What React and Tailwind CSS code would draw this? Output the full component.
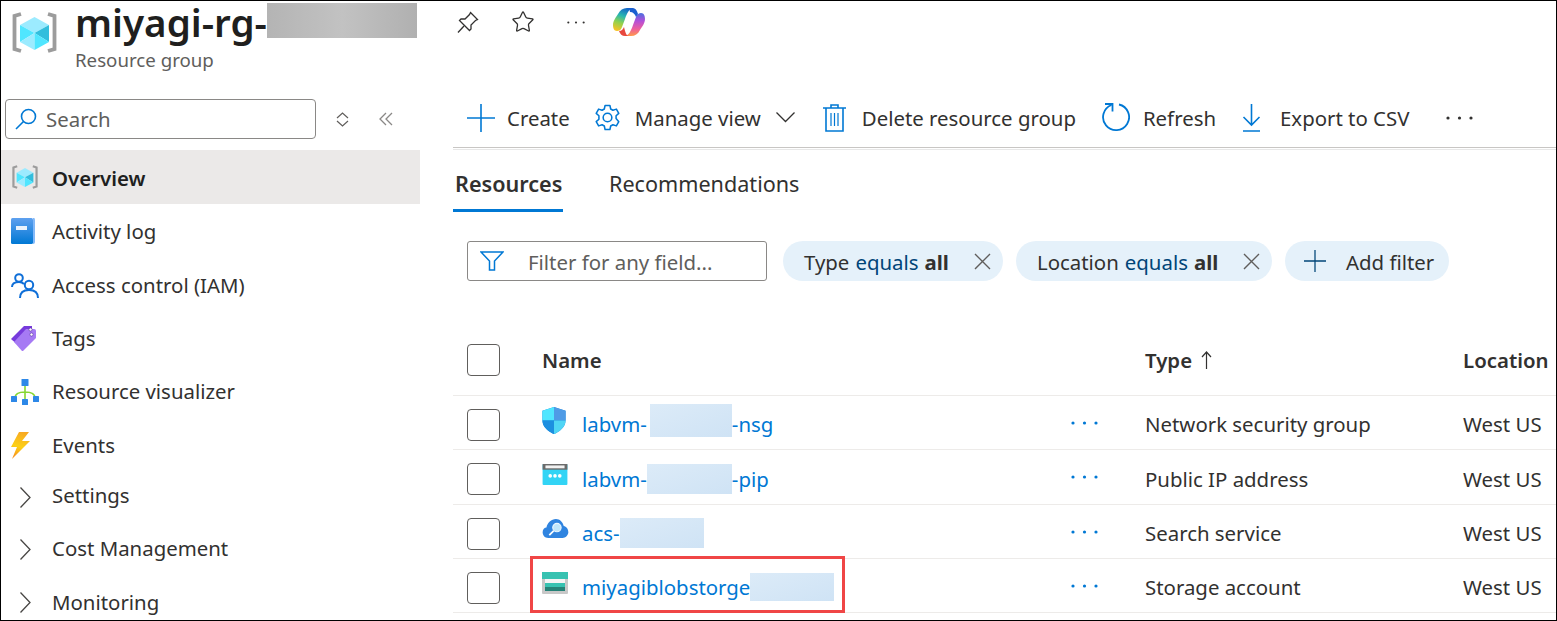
import { Star } from 'lucide-react'

function ResourceGroupIcon({ className }) {
    return (
        <svg className={className} viewBox="0 0 45 41" fill="none">
            <path d="M9 2 L2.5 4 V37 L9 39" stroke="#9c9c9c" strokeWidth="3.8" />
            <path d="M36 2 L42.5 4 V37 L36 39" stroke="#9c9c9c" strokeWidth="3.8" />
            <path d="M22.5 5 L37 13 L22.5 21 L8 13Z" fill="#9cebff" />
            <path d="M8 13 L22.5 21 L8 30Z" fill="#50e6ff" />
            <path d="M8 30 L22.5 21 V38Z" fill="#9cebff" />
            <path d="M37 13 L22.5 21 L37 30Z" fill="#32bedd" />
            <path d="M37 30 L22.5 21 V38Z" fill="#50e6ff" />
        </svg>
    )
}

function CopilotIcon() {
    return (
        <svg className="w-[32px] h-[30px]" viewBox="0 0 32 30">
            <defs>
                <linearGradient id="cl" x1="0.6" y1="0" x2="0.3" y2="1">
                    <stop offset="0" stopColor="#1466c8" />
                    <stop offset="0.35" stopColor="#27b7b0" />
                    <stop offset="0.65" stopColor="#8fd14f" />
                    <stop offset="1" stopColor="#f7c325" />
                </linearGradient>
                <linearGradient id="cr" x1="0.5" y1="0" x2="0.5" y2="1">
                    <stop offset="0" stopColor="#4a6fe0" />
                    <stop offset="0.35" stopColor="#b44fd8" />
                    <stop offset="0.7" stopColor="#ee5f9c" />
                    <stop offset="1" stopColor="#ff9a4a" />
                </linearGradient>
            </defs>
            <path d="M14 1 H20 C16 2 14 6 12 12 L9 20 C8 23 6 24 4 24 C1 24 0 21 0 18 C0 14 3 10 5 7 C7 3 10 1 14 1Z" fill="url(#cl)" />
            <path d="M18 29 H12 C16 28 18 24 20 18 L23 10 C24 7 26 6 28 6 C31 6 32 9 32 12 C32 16 29 20 27 23 C25 27 22 29 18 29Z" fill="url(#cr)" />
            <path d="M16 1 H20 C22 1 24 3 25 7 L23 10 C22 7 20 5 17 5Z" fill="#1b5fd0" />
            <path d="M6 24 C9 24 10 22 11 20 C12 24 13 29 16 29 H12 C9 29 7 27 6 24Z" fill="#e8483f" />
        </svg>
    )
}

function PinIcon() {
    return (
        <svg className="w-[24px] h-[24px]" viewBox="0 0 24 24" fill="none" stroke="#323130" strokeWidth="1.3">
            <path d="M14.5 2.5 L21.5 9.5 L19.5 10.5 L15 15 L15 19 L13.5 20.5 L3.5 10.5 L5 9 L9 9 L13.5 4.5Z" />
            <path d="M8 16 L2 22.5" />
        </svg>
    )
}

function PlusIcon({ className, stroke }) {
    return (
        <svg className={className} viewBox="0 0 28 28" fill="none" stroke={stroke} strokeWidth="1.6">
            <path d="M14 0 V28 M0 14 H28" />
        </svg>
    )
}

function GearIcon() {
    return (
        <svg className="w-[27px] h-[27px]" viewBox="0 0 28 28" fill="none" stroke="#0078d4" strokeWidth="1.6">
            <path d="M11.5 1.5 H16.5 L17.3 5.2 L19.6 6.5 L23.2 5.3 L25.7 9.7 L22.9 12.2 V15 L25.7 18.3 L23.2 22.7 L19.6 21.5 L17.3 22.8 L16.5 26.5 H11.5 L10.7 22.8 L8.4 21.5 L4.8 22.7 L2.3 18.3 L5.1 15.8 V12.2 L2.3 9.7 L4.8 5.3 L8.4 6.5 L10.7 5.2Z" strokeLinejoin="round" />
            <circle cx="14" cy="14" r="4.5" />
        </svg>
    )
}

function TrashIcon() {
    return (
        <svg className="w-[23px] h-[28px]" viewBox="0 0 23 28" fill="none" stroke="#0078d4" strokeWidth="1.6">
            <path d="M0 4 H23 M8 4 V1 H15 V4 M3 4 V27 H20 V4" />
            <path d="M8 9 V22 M11.5 9 V22 M15 9 V22" strokeWidth="1.2" />
        </svg>
    )
}

function RefreshIcon() {
    return (
        <svg className="w-[28px] h-[29px]" viewBox="0 0 28 29" fill="none" stroke="#0078d4" strokeWidth="1.8">
            <path d="M17 1.5 A13 13 0 1 1 9.5 2" />
            <path d="M3 1 H10.5 V8.5" />
        </svg>
    )
}

function DownloadIcon() {
    return (
        <svg className="w-[21px] h-[28px]" viewBox="0 0 21 28" fill="none" stroke="#0078d4" strokeWidth="1.6">
            <path d="M10.5 0 V21 M2.5 13 L10.5 21 L18.5 13 M2 27 H19" />
        </svg>
    )
}

function DotsIcon({ fill, className }) {
    return (
        <svg className={className} viewBox="0 0 27 4" fill={fill}>
            <circle cx="2" cy="2" r="1.6" />
            <circle cx="13.5" cy="2" r="1.6" />
            <circle cx="25" cy="2" r="1.6" />
        </svg>
    )
}

function CloseIcon() {
    return (
        <svg className="w-[17px] h-[17px]" viewBox="0 0 17 17" fill="none" stroke="#605e5c" strokeWidth="1.4">
            <path d="M1 1 L16 16 M16 1 L1 16" />
        </svg>
    )
}

function SidebarIcon({ name }) {
    if (name === 'overview') return <ResourceGroupIcon className="w-[26px] h-[24px]" />
    if (name === 'activity') {
        return (
            <svg className="w-[24px] h-[26px]" viewBox="0 0 24 26">
                <defs>
                    <linearGradient id="book" x1="0" y1="0" x2="0" y2="1">
                        <stop offset="0" stopColor="#5ea0ef" />
                        <stop offset="1" stopColor="#0078d4" />
                    </linearGradient>
                </defs>
                <rect x="0" y="0" width="22" height="26" rx="1.5" fill="url(#book)" />
                <path d="M22 0 H23 Q24 0 24 2 V24 Q24 26 22 26 V0Z" fill="#83b9f9" />
                <rect x="5" y="8" width="11" height="4" fill="#eaf3fc" />
            </svg>
        )
    }
    if (name === 'access') {
        return (
            <svg className="w-[28px] h-[25px]" viewBox="0 0 28 25" fill="none" stroke="#0f6fd8" strokeWidth="2">
                <circle cx="8" cy="5" r="3.8" />
                <path d="M1 14 C1 10 4 9 8 9 C10 9 12 10 13 11" />
                <circle cx="18" cy="12" r="4.2" />
                <path d="M9 25 C9 19 13 17 18 17 C23 17 27 19 27 25" />
            </svg>
        )
    }
    if (name === 'tags') {
        return (
            <svg className="w-[26px] h-[26px]" viewBox="0 0 26 26">
                <path d="M0 13 L13 0 H21 L21 8 L8 20Z" fill="#773adc" />
                <path d="M3 16 L15 3 H23 Q25 3 25 5 V12 L12 25 H11Z" fill="#a67af4" />
                <circle cx="19.5" cy="3.5" r="1.6" fill="#fff" stroke="#552f99" strokeWidth="0.6" />
                <circle cx="20.5" cy="8.5" r="1.6" fill="#fff" stroke="#552f99" strokeWidth="0.6" />
            </svg>
        )
    }
    if (name === 'visualizer') {
        return (
            <svg className="w-[28px] h-[26px]" viewBox="0 0 28 26">
                <path d="M14 6 V21 M4 19 C4 14 10 13 14 13 C18 13 24 14 24 19" fill="none" stroke="#86d633" strokeWidth="1.6" />
                <rect x="10.5" y="0" width="7" height="7" rx="0.6" fill="#2d88e8" />
                <rect x="0" y="17" width="6" height="6" rx="0.6" fill="#2d88e8" />
                <rect x="22" y="17" width="6" height="6" rx="0.6" fill="#2d88e8" />
                <rect x="11" y="20" width="6" height="6" rx="0.6" fill="#2d88e8" />
            </svg>
        )
    }
    if (name === 'events') {
        return (
            <svg className="w-[20px] h-[27px]" viewBox="0 0 20 27">
                <defs>
                    <linearGradient id="bolt" x1="0.6" y1="0" x2="0.4" y2="1">
                        <stop offset="0" stopColor="#f7a823" />
                        <stop offset="0.55" stopColor="#fcd116" />
                        <stop offset="1" stopColor="#f78d1e" />
                    </linearGradient>
                </defs>
                <path d="M8 0 H18 L11 9 H19 L1 27 L6 15 H0Z" fill="url(#bolt)" />
            </svg>
        )
    }
    return (
        <svg className="w-[11px] h-[21px]" viewBox="0 0 11 21" fill="none" stroke="#484644" strokeWidth="1.3">
            <path d="M0.5 0.5 L10 10.5 L0.5 20.5" />
        </svg>
    )
}

function ResourceIcon({ type }) {
    if (type === 'nsg') {
        return (
            <svg className="w-[24px] h-[27px]" viewBox="0 0 24 28">
                <path d="M12 0 L24 4 V14 C24 21 17 26 12 28 C7 26 0 21 0 14 V4Z" fill="#0f85dc" />
                <path d="M12 0 L0 4 V14 H12Z" fill="#50e6ff" />
                <path d="M12 0 L24 4 V14 H12Z" fill="#4f9be6" />
                <path d="M12 14 V28 C7 26 0 21 0 14Z" fill="#1d8fe0" />
                <path d="M12 14 H24 C24 21 17 26 12 28Z" fill="#50d5f5" />
            </svg>
        )
    }
    if (type === 'pip') {
        return (
            <svg className="w-[26px] h-[21px]" viewBox="0 0 26 22">
                <rect width="26" height="22" rx="1" fill="#32d4f5" />
                <rect width="26" height="6" fill="#6b6b6b" />
                <rect x="3" y="1.5" width="20" height="3" fill="#f2f2f2" />
                <circle cx="8" cy="12.5" r="1.9" fill="#fff" />
                <circle cx="13" cy="12.5" r="1.9" fill="#fff" />
                <circle cx="18" cy="12.5" r="1.9" fill="#fff" />
            </svg>
        )
    }
    if (type === 'search') {
        return (
            <svg className="w-[27px] h-[20px]" viewBox="0 0 27 21">
                <path d="M6 20 C2 20 0 17 0 14 C0 11 2 9 4 9 C5 4 9 0 14 0 C18 0 21 3 22 7 C25 8 27 10 27 14 C27 17 24 20 21 20Z" fill="#2f84e0" />
                <circle cx="15" cy="9" r="4.4" fill="#bfe6fb" stroke="#e8f6ff" strokeWidth="1.2" />
                <path d="M11.5 12.5 L7 17" stroke="#fff" strokeWidth="1.8" />
            </svg>
        )
    }
    return (
        <svg className="w-[26px] h-[22px]" viewBox="0 0 26 22">
            <rect width="26" height="22" rx="1" fill="#c8c8c8" />
            <rect width="26" height="7" fill="#37c2b1" />
            <rect x="3" y="7" width="20" height="4" fill="#f4f4f4" />
            <rect x="3" y="11" width="20" height="4" fill="#37c2b1" />
            <rect x="3" y="15" width="20" height="4" fill="#258277" />
        </svg>
    )
}

function Blur({ className }) {
    return <span className={`block bg-gradient-to-br from-[#dcebf8] to-[#cfe3f5] ${className}`} />
}

const navItems = [
    { label: 'Activity log', icon: 'activity', h: 'h-[54px]', text: '' },
    { label: 'Access control (IAM)', icon: 'access', h: 'h-[54px]', text: '' },
    { label: 'Tags', icon: 'tags', h: 'h-[53px]', text: '' },
    { label: 'Resource visualizer', icon: 'visualizer', h: 'h-[53px]', text: '' },
    { label: 'Events', icon: 'events', h: 'h-[54px]', text: '' },
    { label: 'Settings', icon: 'chevron', h: 'h-[50px]', text: 'pb-[4px]' },
    { label: 'Cost Management', icon: 'chevron', h: 'h-[54px]', text: 'pb-[2px]' },
    { label: 'Monitoring', icon: 'chevron', h: 'h-[52px]', text: '' },
]

const rows = [
    { icon: 'nsg', prefix: 'labvm-', blur: 'ml-[3px] w-[82px] h-[33px] -mt-[7px]', suffix: '-nsg', type: 'Network security group', h: 'h-[54px]' },
    { icon: 'pip', prefix: 'labvm-', blur: 'w-[85px] h-[30px]', suffix: '-pip', type: 'Public IP address', h: 'h-[55px]' },
    { icon: 'search', prefix: 'acs-', blur: 'w-[84px] h-[30px]', suffix: '', type: 'Search service', h: 'h-[54px]' },
    { icon: 'storage', prefix: 'miyagiblobstorge', blur: 'w-[84px] h-[28px]', suffix: '', type: 'Storage account', h: 'h-[54px]' },
]

function Checkbox() {
    return <div className="w-[33px] h-[32px] rounded-[4px] border border-[#605e5c] bg-white" />
}

function FilterPill({ label, width }) {
    return (
        <div className={`flex items-center h-[40px] rounded-full bg-[#e5f1fa] pl-[21px] ${width}`}>
            <span className="pt-[3px]">{label}</span>
            <span className="ml-[6px] pt-[3px] text-[#004578]">equals</span>
            <span className="ml-[6px] pt-[3px] font-bold">all</span>
            <span className="ml-auto mr-[12px]"><CloseIcon /></span>
        </div>
    )
}

export default function App() {
    return (
        <div className="w-[1557px] h-[621px] flex overflow-hidden border border-black bg-white text-[#323130] text-[20.4px] font-['Noto_Sans',sans-serif]">
            {/* left blade menu */}
            <div className="w-[419px] shrink-0">
                <div className="h-[98px] flex overflow-hidden">
                    <div className="pl-[11px] pt-[11px] w-[74px] shrink-0">
                        <ResourceGroupIcon className="w-[45px] h-[41px]" />
                    </div>
                    <div>
                        <div className="flex items-start h-[42px]">
                            <span className="text-[38.6px] leading-[42px] font-semibold text-[#201f1e]">miyagi-rg-</span>
                            <span className="block w-[150px] h-[35px] mt-[2px] bg-gradient-to-r from-[#b4b4b4] via-[#c2c2c2] to-[#b0b0b0]" />
                        </div>
                        <div className="mt-[4px] text-[18.7px] leading-[26px] text-[#605e5c]">Resource group</div>
                    </div>
                </div>
                <div className="flex items-center h-[40px]">
                    <div className="ml-[4px] w-[311px] h-[40px] flex items-center rounded-[4px] border border-[#8a8886] pl-[9px]">
                        <svg className="w-[22px] h-[22px]" viewBox="0 0 22 22" fill="none" stroke="#0078d4" strokeWidth="1.6">
                            <circle cx="13.5" cy="8.5" r="7" />
                            <path d="M8.5 13.5 L1 21" />
                        </svg>
                        <span className="ml-[9px] text-[#605e5c]">Search</span>
                    </div>
                    <svg className="ml-[20px] w-[13px] h-[15px]" viewBox="0 0 13 15" fill="none" stroke="#605e5c" strokeWidth="1.2">
                        <path d="M1 6 L6.5 1 L12 6 M1 9 L6.5 14 L12 9" />
                    </svg>
                    <svg className="ml-[30px] w-[14px] h-[14px]" viewBox="0 0 14 14" fill="none" stroke="#8a8886" strokeWidth="1.3">
                        <path d="M7 1 L1 7 L7 13 M13 1 L7 7 L13 13" />
                    </svg>
                </div>
                <div className="mt-[11px] h-[54px] flex items-center bg-[#ebe9e8] font-semibold text-[#201f1e]">
                    <div className="w-[51px] pl-[11px] shrink-0"><SidebarIcon name="overview" /></div>
                    <span className="pt-[2px]">Overview</span>
                </div>
                {navItems.map((item) => (
                    <div key={item.label} className={`${item.h} flex items-center`}>
                        <div className={`w-[51px] shrink-0 flex ${item.icon === 'chevron' ? 'pl-[19px]' : 'pl-[10px]'}`}>
                            <SidebarIcon name={item.icon} />
                        </div>
                        <span className={item.text}>{item.label}</span>
                    </div>
                ))}
            </div>

            {/* right content */}
            <div className="flex-1 min-w-0">
                <div className="h-[42px] flex items-center pl-[36px]">
                    <PinIcon />
                    <Star className="ml-[31px] w-[24px] h-[24px]" strokeWidth={1.3} />
                    <DotsIcon fill="#323130" className="ml-[32px] w-[18px] h-[3px]" />
                    <span className="ml-[28px]"><CopilotIcon /></span>
                </div>
                <div className="mt-[45px] h-[60px] ml-[33px] flex items-center border-b border-[#c8c6c4] pl-[14px]">
                    <PlusIcon className="w-[28px] h-[28px]" stroke="#0078d4" />
                    <span className="ml-[12px] pt-[1px]">Create</span>
                    <span className="ml-[24px]"><GearIcon /></span>
                    <span className="ml-[14px] pt-[1px]">Manage view</span>
                    <svg className="ml-[15px] w-[19px] h-[11px]" viewBox="0 0 19 11" fill="none" stroke="#323130" strokeWidth="1.3">
                        <path d="M0.5 0.5 L9.5 9.5 L18.5 0.5" />
                    </svg>
                    <span className="ml-[28px]"><TrashIcon /></span>
                    <span className="ml-[16px] pt-[1px]">Delete resource group</span>
                    <span className="ml-[26px]"><RefreshIcon /></span>
                    <span className="ml-[13px] pt-[1px]">Refresh</span>
                    <span className="ml-[25px]"><DownloadIcon /></span>
                    <span className="ml-[18px] pt-[1px]">Export to CSV</span>
                    <DotsIcon fill="#323130" className="ml-[37px] w-[27px] h-[4px]" />
                </div>
                <div className="ml-[33px] h-[1px] mt-[1px] bg-[#e8e8e8]" />
                <div className="ml-[33px] h-[62px] flex text-[21.6px]">
                    <div className="w-[110px] h-[62px] flex items-center pl-[2px] pt-[9px] font-semibold border-b-[3px] border-[#0078d4]">Resources</div>
                    <div className="ml-[46px] h-[62px] flex items-center pt-[6px]">Recommendations</div>
                </div>
                <div className="ml-[47px] mt-[29px] flex">
                    <div className="w-[300px] h-[40px] flex items-center rounded-[3px] border border-[#8a8886] pl-[12px]">
                        <svg className="w-[24px] h-[20px]" viewBox="0 0 24 20" fill="none" stroke="#0078d4" strokeWidth="1.5">
                            <path d="M1 1 H23 L14.5 10 V19 H9.5 V10Z" />
                        </svg>
                        <span className="ml-[24px] pt-[3px] text-[#605e5c]">Filter for any field...</span>
                    </div>
                    <div className="ml-[16px]"><FilterPill label="Type" width="w-[220px]" /></div>
                    <div className="ml-[13px]"><FilterPill label="Location" width="w-[256px]" /></div>
                    <div className="ml-[13px] w-[164px] h-[40px] flex items-center rounded-full bg-[#e5f1fa] pl-[19px]">
                        <PlusIcon className="w-[22px] h-[22px]" stroke="#004578" />
                        <span className="ml-[20px] pt-[3px]">Add filter</span>
                    </div>
                </div>
                {/* resources table */}
                <div className="ml-[33px] mt-[43px]">
                    <div className="h-[72px] grid grid-cols-[89px_529px_74px_318px_1fr] items-center border-b border-[#edebe9] font-semibold">
                        <div className="pl-[14px]"><Checkbox /></div>
                        <div className="pt-[2px]">Name</div>
                        <div />
                        <div className="flex items-center pt-[2px]">
                            Type
                            <svg className="ml-[9px] w-[11px] h-[18px]" viewBox="0 0 11 18" fill="none" stroke="#323130" strokeWidth="1.2">
                                <path d="M5.5 18 V1 M1 6 L5.5 1 L10 6" />
                            </svg>
                        </div>
                        <div className="pt-[2px]">Location</div>
                    </div>
                    {rows.map((row, i) => (
                        <div key={row.type} className={`${row.h} relative grid grid-cols-[89px_529px_74px_318px_1fr] items-center border-b border-[#edebe9]`}>
                            <div className="pl-[14px] pt-[4px]"><Checkbox /></div>
                            <div className="flex items-center pt-[4px] text-[#0078d4]">
                                <div className="w-[40px] shrink-0 -mt-[8px]"><ResourceIcon type={row.icon} /></div>
                                <span>{row.prefix}</span>
                                <Blur className={row.blur} />
                                {row.suffix && <span>{row.suffix}</span>}
                            </div>
                            <div className="pt-[2px]"><DotsIcon fill="#0078d4" className="w-[27px] h-[4px] -mt-[2px]" /></div>
                            <div className="pt-[4px]">{row.type}</div>
                            <div className="pt-[4px]">West US</div>
                            {i === 3 && <div className="absolute left-[77px] top-[-3px] w-[315px] h-[57px] border-[3px] border-[#f04646]" />}
                        </div>
                    ))}
                </div>
            </div>
        </div>
    )
}
